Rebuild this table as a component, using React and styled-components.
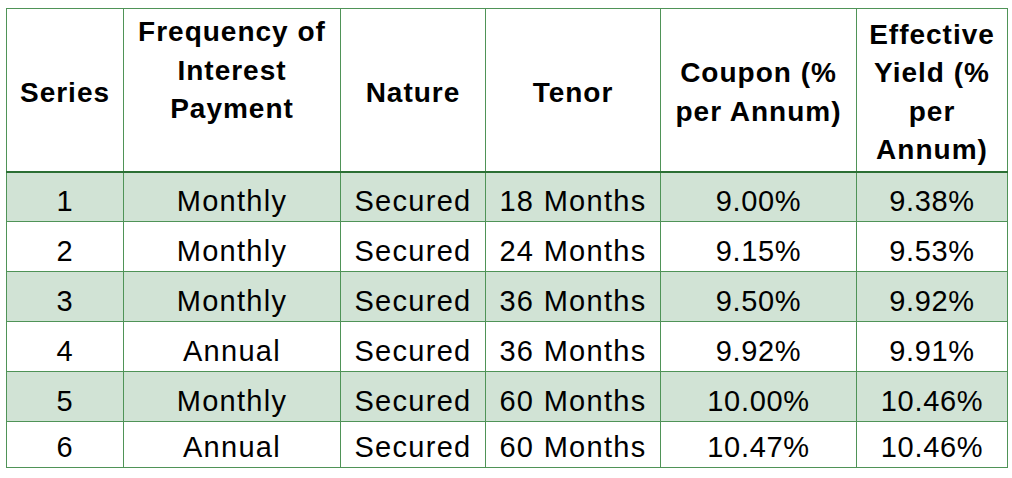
import React from "react";
import styled, { createGlobalStyle } from "styled-components";

const GlobalStyle = createGlobalStyle`
  body {
    margin: 0;
    padding: 8px 0 0 6px;
    background: #ffffff;
    font-family: "Liberation Sans", Arial, sans-serif;
    color: #000;
  }
`;

const columns = [
  { key: "series", title: ["Series"], width: 117 },
  { key: "freq", title: ["Frequency of", "Interest", "Payment"], width: 217, lift: true },
  { key: "nature", title: ["Nature"], width: 145 },
  { key: "tenor", title: ["Tenor"], width: 175 },
  { key: "coupon", title: ["Coupon (%", "per Annum)"], width: 196 },
  { key: "yield", title: ["Effective", "Yield (%", "per", "Annum)"], width: 151 },
];

const rows = [
  ["1", "Monthly", "Secured", "18 Months", "9.00%", "9.38%"],
  ["2", "Monthly", "Secured", "24 Months", "9.15%", "9.53%"],
  ["3", "Monthly", "Secured", "36 Months", "9.50%", "9.92%"],
  ["4", "Annual", "Secured", "36 Months", "9.92%", "9.91%"],
  ["5", "Monthly", "Secured", "60 Months", "10.00%", "10.46%"],
  ["6", "Annual", "Secured", "60 Months", "10.47%", "10.46%"],
];

const wordy = ["freq", "nature", "tenor"];

const App = () => {
  return (
    <>
      <GlobalStyle />
      <Table>
        <colgroup>
          {columns.map((c) => (
            <col key={c.key} style={{ width: c.width }} />
          ))}
        </colgroup>
        <thead>
          <HeadRow>
            {columns.map((c) => (
              <HeadCell key={c.key} $lift={c.lift}>
                {c.title.map((line, i) => (
                  <div key={i}>{line}</div>
                ))}
              </HeadCell>
            ))}
          </HeadRow>
        </thead>
        <tbody>
          {rows.map((r, i) => (
            <Row key={i} $shaded={i % 2 === 0} $last={i === rows.length - 1}>
              {r.map((v, j) => (
                <Cell key={j} $wordy={wordy.includes(columns[j].key)}>
                  {v}
                </Cell>
              ))}
            </Row>
          ))}
        </tbody>
      </Table>
    </>
  );
};

export default App;

const Table = styled.table`
  width: 1001px;
  table-layout: fixed;
  border-collapse: collapse;
  border: 1px solid #4f9357;
`;

const HeadRow = styled.tr`
  height: 163px;
`;

const HeadCell = styled.th`
  padding: ${(p) => (p.$lift ? "0 0 38px" : "6px 0 0")};
  border-left: 1px solid #4f9357;
  border-right: 1px solid #4f9357;
  border-bottom: 2px solid #2b6f34;
  font-size: 28px;
  font-weight: 700;
  letter-spacing: 1px;
  line-height: 38.5px;
  text-align: center;
  vertical-align: middle;
`;

const Row = styled.tr`
  height: ${(p) => (p.$last ? "46px" : "50px")};
  background: ${(p) => (p.$shaded ? "#d1e3d5" : "#ffffff")};
`;

const Cell = styled.td`
  padding: 0 0 5px;
  border: 1px solid #4f9357;
  font-size: 29px;
  letter-spacing: ${(p) => (p.$wordy ? "1.3px" : "0.7px")};
  line-height: 30px;
  text-align: center;
  vertical-align: bottom;
  white-space: nowrap;
`;
